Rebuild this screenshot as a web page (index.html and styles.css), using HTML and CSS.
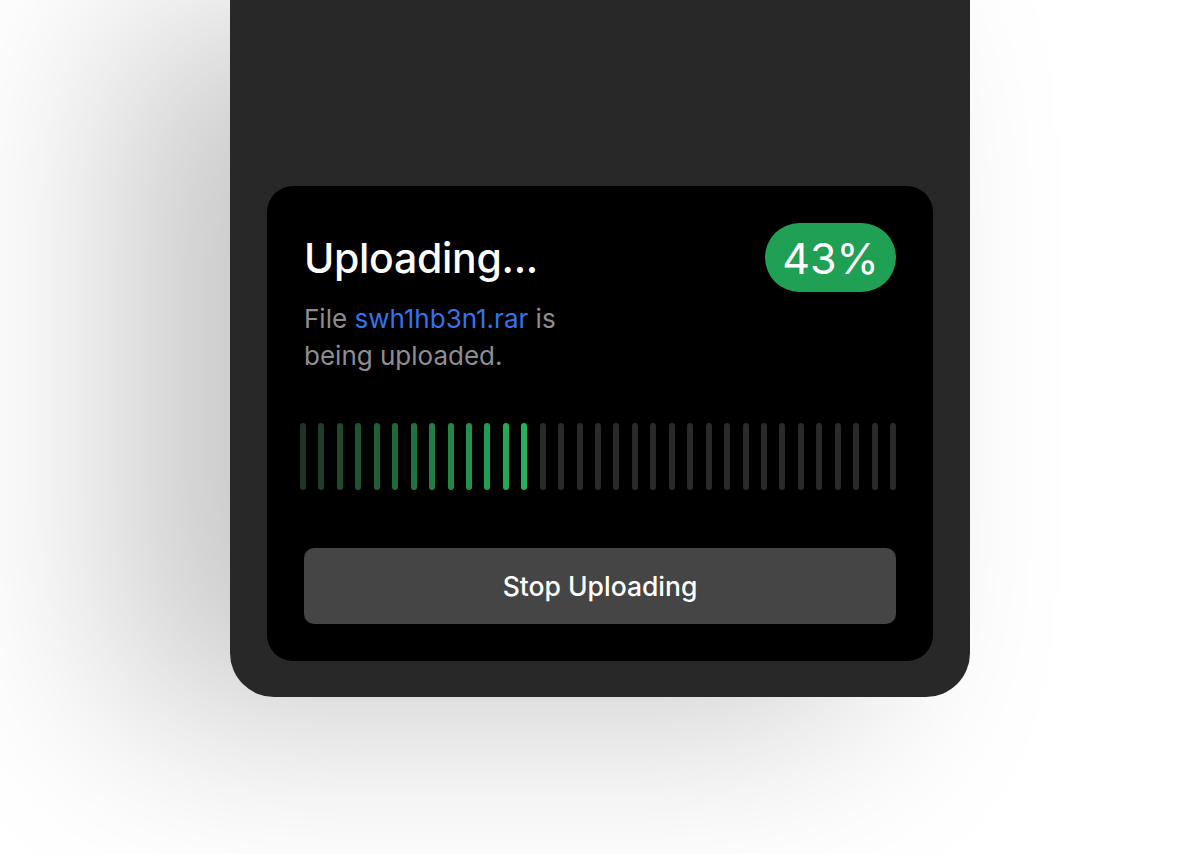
FILE: index.html
```html
<html lang="en">
<head>
    <title>Uploading</title>
    <link rel="stylesheet" href="styles.css">
</head>
<body>

<div class="device">
    <div class="upload-card">
        <div class="upload-header">
            <div class="upload-text">
                <h1 class="upload-title">Uploading...</h1>
                <p class="upload-desc">File <span class="file-name">swh1hb3n1.rar</span> is being uploaded.</p>
            </div>
            <span class="percent-badge">43%</span>
        </div>

        <div class="progress-bars">
            <span class="bar on"></span>
            <span class="bar on"></span>
            <span class="bar on"></span>
            <span class="bar on"></span>
            <span class="bar on"></span>
            <span class="bar on"></span>
            <span class="bar on"></span>
            <span class="bar on"></span>
            <span class="bar on"></span>
            <span class="bar on"></span>
            <span class="bar on"></span>
            <span class="bar on"></span>
            <span class="bar on"></span>
            <span class="bar"></span>
            <span class="bar"></span>
            <span class="bar"></span>
            <span class="bar"></span>
            <span class="bar"></span>
            <span class="bar"></span>
            <span class="bar"></span>
            <span class="bar"></span>
            <span class="bar"></span>
            <span class="bar"></span>
            <span class="bar"></span>
            <span class="bar"></span>
            <span class="bar"></span>
            <span class="bar"></span>
            <span class="bar"></span>
            <span class="bar"></span>
            <span class="bar"></span>
            <span class="bar"></span>
            <span class="bar"></span>
            <span class="bar"></span>
        </div>

        <button class="stop-button">Stop Uploading</button>
    </div>
</div>

</body>
</html>
```

FILE: styles.css
```css
:root {
    --page: #ffffff;
    --device: #282828;
    --card: #000000;
    --text: #ffffff;
    --muted: #8e8e92;
    --link: #3573ec;
    --green: #20a054;
    --bar-off: #2a2a2a;
    --button: #454545;
}

* {
    box-sizing: border-box;
}

html, body {
    width: 100%;
    height: 100%;
    margin: 0;
    padding: 0;
    background: var(--page);
    font-family: "Inter", "Noto Sans", sans-serif;
    overflow: hidden;
}

.device {
    width: 740px;
    height: 697px;
    margin: 0 auto;
    background: var(--device);
    border-radius: 0 0 44px 44px;
    box-shadow: -110px 20px 200px rgba(0, 0, 0, 0.22);
    display: flex;
    flex-direction: column;
    justify-content: flex-end;
    padding: 0 37px 36px;
}

.upload-card {
    background: var(--card);
    border-radius: 26px;
    padding: 37px;
    display: flex;
    flex-direction: column;
}

.upload-header {
    display: flex;
    justify-content: space-between;
    align-items: flex-start;
}

.upload-title {
    margin: 11px 0 0;
    font-size: 41px;
    line-height: 48px;
    font-weight: 500;
    color: var(--text);
    letter-spacing: -0.3px;
}

.upload-desc {
    margin: 18px 0 0;
    max-width: 290px;
    font-size: 26px;
    line-height: 37px;
    color: var(--muted);
}

.file-name {
    color: var(--link);
}

.percent-badge {
    background: var(--green);
    color: var(--text);
    height: 69px;
    width: 131px;
    border-radius: 35px;
    display: flex;
    align-items: center;
    justify-content: center;
    font-size: 43px;
    font-weight: 400;
}

.progress-bars {
    display: flex;
    justify-content: space-between;
    margin: 49px 0 0 -4px;
    height: 67px;
}

.bar {
    width: 6px;
    height: 100%;
    border-radius: 3px;
    background: var(--bar-off);
}

.bar.on:nth-child(1) { background: #1f3326; }
.bar.on:nth-child(2) { background: #1f3e2a; }
.bar.on:nth-child(3) { background: #1f482f; }
.bar.on:nth-child(4) { background: #1f5333; }
.bar.on:nth-child(5) { background: #205e38; }
.bar.on:nth-child(6) { background: #20683c; }
.bar.on:nth-child(7) { background: #207341; }
.bar.on:nth-child(8) { background: #217e45; }
.bar.on:nth-child(9) { background: #21884a; }
.bar.on:nth-child(10) { background: #21934e; }
.bar.on:nth-child(11) { background: #219e53; }
.bar.on:nth-child(12) { background: #22a857; }
.bar.on:nth-child(13) { background: #22b35c; }

.stop-button {
    margin-top: 58px;
    height: 76px;
    border: none;
    border-radius: 10px;
    background: var(--button);
    color: var(--text);
    font-family: inherit;
    font-size: 26.5px;
    font-weight: 500;
}
```
